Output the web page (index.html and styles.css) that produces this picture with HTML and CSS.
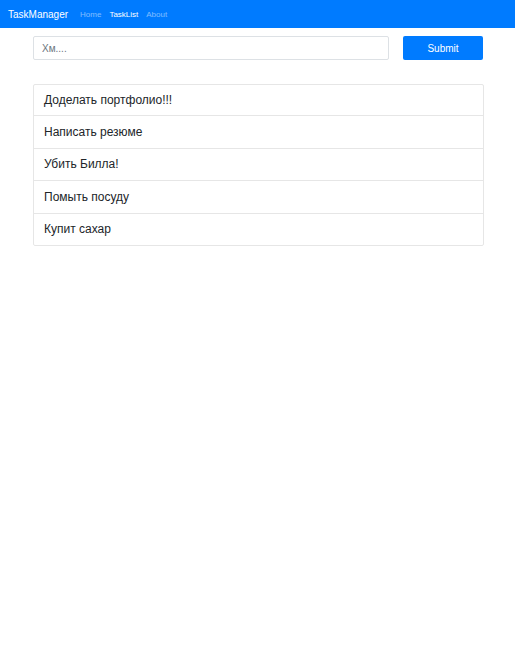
FILE: index.html
```html
<!DOCTYPE html>
<html>
<head>
<meta charset="utf-8">
<link rel="stylesheet" href="styles.css">
</head>
<body>
<nav class="navbar">
  <span class="brand">TaskManager</span>
  <a class="nav-link">Home</a>
  <a class="nav-link active">TaskList</a>
  <a class="nav-link">About</a>
</nav>
<main class="container">
  <form class="task-form">
    <input class="task-input" type="text" placeholder="Хм....">
    <button class="btn" type="button">Submit</button>
  </form>
  <ul class="list">
    <li class="item">Доделать портфолио!!!</li>
    <li class="item">Написать резюме</li>
    <li class="item">Убить Билла!</li>
    <li class="item">Помыть посуду</li>
    <li class="item">Купит сахар</li>
  </ul>
</main>
</body>
</html>
```
FILE: styles.css
```css
* { box-sizing: border-box; }
body {
  margin: 0;
  font-family: "Liberation Sans", Arial, sans-serif;
  color: #212529;
  background: #fff;
}
.navbar {
  height: 28px;
  background: #007bff;
  display: flex;
  align-items: center;
  padding: 0 8px;
}
.brand {
  color: #fff;
  font-size: 10px;
  margin-right: 8px;
  margin-top: 1px;
}
.nav-link {
  color: rgba(255,255,255,0.5);
  font-size: 8px;
  padding: 0 4px;
}
.nav-link.active { color: #fff; }
.container {
  width: 451px;
  margin: 0 31px 0 33px;
  padding-top: 8px;
}
.task-form {
  display: flex;
  gap: 14px;
  height: 24px;
}
.task-input {
  flex: 1;
  height: 24px;
  border: 1px solid #dde1e5;
  border-radius: 2px;
  padding: 0 8px;
  font-family: inherit;
  font-size: 10px;
  color: #495057;
}
.task-input::placeholder { color: #6c757d; }
.btn {
  width: 80px;
  margin-right: 1px;
  height: 24px;
  border: none;
  border-radius: 2px;
  background: #007bff;
  color: #fff;
  font-family: inherit;
  font-size: 10px;
}
.list {
  list-style: none;
  margin: 24px 0 0;
  padding: 0;
  border: 1px solid #e6e6e6;
  border-radius: 2px;
}
.item {
  height: 32.5px;
  padding: 0 10px;
  display: flex;
  align-items: center;
  font-size: 12px;
  border-top: 1px solid #e6e6e6;
}
.item:first-child { border-top: none; height: 30px; }
```
